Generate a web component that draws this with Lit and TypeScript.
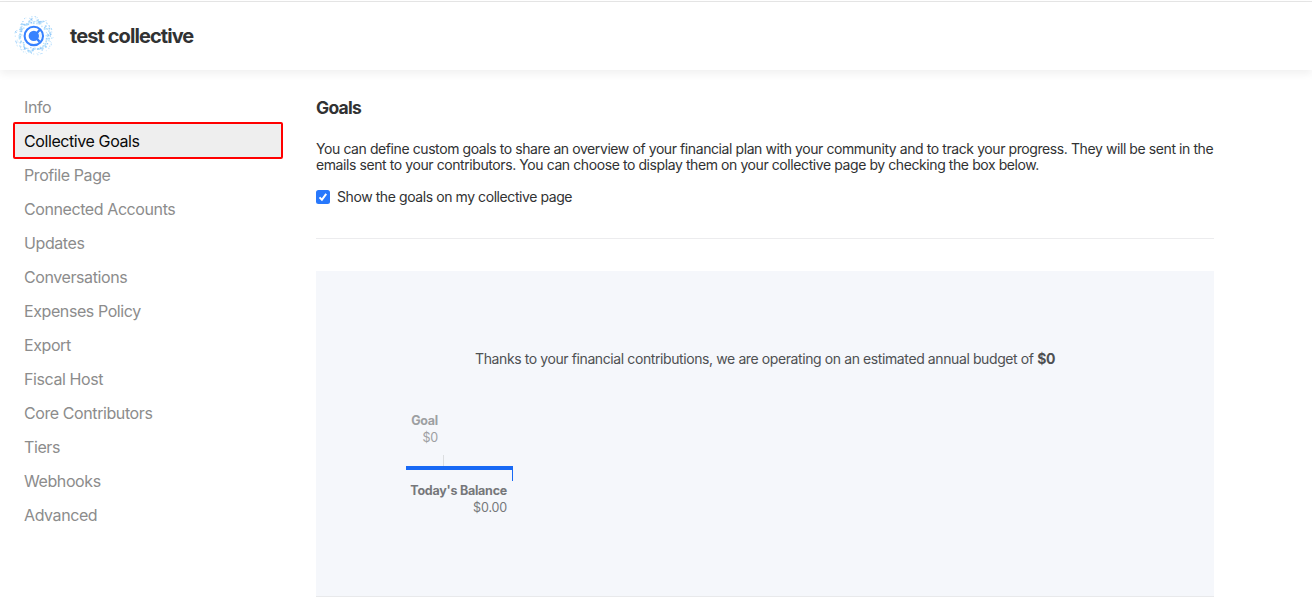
import { LitElement, html, css, svg } from "lit";
import { customElement, property } from "lit/decorators.js";
import { classMap } from "lit/directives/class-map.js";

const MENU = [
  "Info",
  "Collective Goals",
  "Profile Page",
  "Connected Accounts",
  "Updates",
  "Conversations",
  "Expenses Policy",
  "Export",
  "Fiscal Host",
  "Core Contributors",
  "Tiers",
  "Webhooks",
  "Advanced",
];

const DOT_COLORS = ["#b5e0fb", "#9dd3fb", "#c9e8fc", "#a9d8fb", "#8dc6fa"];

// Golden-angle scatter of small squares in a halo around the emblem.
const DOTS = Array.from({ length: 170 }, (_, i) => {
  const angle = i * 2.39996;
  const noise = Math.abs(Math.sin(i * 78.233) * 43758.5453) % 1;
  const radius = 12.2 + noise * 7.4;
  return {
    x: 20 + Math.cos(angle) * radius,
    y: 19.7 + Math.sin(angle) * radius,
    size: radius > 17 ? 0.9 : 1.2 + (i % 3) * 0.3,
    color: DOT_COLORS[i % DOT_COLORS.length],
  };
});

@customElement("collective-logo")
class CollectiveLogo extends LitElement {
  static styles = css`
    :host { display: block; width: 40px; height: 40px; }
    svg { display: block; }
  `;
  render() {
    return html`<svg width="40" height="40" viewBox="0 0 40 40" aria-hidden="true">
      ${DOTS.map((d) => svg`<rect x=${d.x - d.size / 2} y=${d.y - d.size / 2} width=${d.size} height=${d.size} fill=${d.color} />`)}
      <circle cx="19.8" cy="19.9" r="10.8" fill="#fff" />
      <circle cx="19.8" cy="19.9" r="9.2" fill="none" stroke="#3782ff" stroke-width="2.1" />
      <circle cx="19.8" cy="19.9" r="5.2" fill="#3782ff" />
      <path d="M22.8 17.2 25.6 14M22.8 22.6 25.6 25.8" stroke="#3782ff" stroke-width="2.4" />
      <path d="M25.4 17q2 2.9 0 5.8" fill="none" stroke="#e8f2ff" stroke-width="1.7" />
    </svg>`;
  }
}

@customElement("settings-menu")
class SettingsMenu extends LitElement {
  @property() active = "Collective Goals";
  static styles = css`
    :host { display: block; width: 270px; }
    .item {
      box-sizing: border-box;
      height: 34px;
      padding-left: 11px;
      font-size: 16px;
      line-height: 34px;
      color: #8c8c8c;
      letter-spacing: -0.41px;
    }
    .active {
      height: 37px;
      margin: -2px 0 -1px;
      padding-left: 9px;
      line-height: 34px;
      border: 2px solid #ff0000;
      border-radius: 2px;
      background: #eee;
      color: #090909;
    }
  `;
  render() {
    return html`<nav>
      ${MENU.map((m) => html`<div class=${classMap({ item: true, active: m === this.active })}>${m}</div>`)}
    </nav>`;
  }
}

@customElement("goals-chart")
class GoalsChart extends LitElement {
  static styles = css`
    :host {
      display: block;
      box-sizing: border-box;
      height: 326px;
      padding-top: 78px;
      background: #f5f7fb;
      border-bottom: 1px solid #e8e9eb;
    }
    .intro {
      text-align: center;
      font-size: 14px;
      line-height: 20px;
      letter-spacing: -0.4px;
      color: #4e5052;
    }
    .chart { width: 107px; margin: 43px 0 0 90px; font-size: 12.5px; line-height: 17px; letter-spacing: -0.15px; text-align: right; }
    .goal { width: 32px; padding-bottom: 9px; color: #9d9fa2; }
    .goal-tick { width: 1px; height: 11px; margin-left: 37px; background: #dcdee0; }
    .bar { height: 4px; background: #1869f5; }
    .bar-tick { width: 1px; height: 11px; margin-left: auto; background: #1869f5; }
    .balance { padding: 1px 6px 0 0; color: #76777a; white-space: nowrap; }
    .name { font-weight: 700; letter-spacing: -0.24px; }
  `;
  render() {
    return html`
      <div class="intro">
        Thanks to your financial contributions, we are operating on an estimated annual budget of <b>$0</b>
      </div>
      <div class="chart">
        <div class="goal"><div class="name">Goal</div><div>$0</div></div>
        <div class="goal-tick"></div>
        <div class="bar"></div>
        <div class="bar-tick"></div>
        <div class="balance"><div class="name">Today's Balance</div><div>$0.00</div></div>
      </div>
    `;
  }
}

@customElement("app-root")
class AppRoot extends LitElement {
  static styles = css`
    :host {
      display: block;
      height: 616px;
      overflow: hidden;
      background: #fff;
      font-family: Inter, sans-serif;
      color: #313233;
    }
    .rule { height: 1px; padding-top: 1px; background: #e6e6e6 content-box; }
    .header {
      display: flex;
      align-items: center;
      box-sizing: border-box;
      height: 68px;
      padding-left: 14px;
      box-shadow: 0 4px 8px rgba(20, 20, 20, 0.06);
    }
    h1 { margin: 0 0 0 16px; font-size: 20px; line-height: 28px; font-weight: 700; letter-spacing: -0.92px; }
    .body { display: flex; align-items: flex-start; }
    settings-menu { margin: 20px 33px 0 13px; }
    main { width: 898px; padding-top: 24px; }
    h2 { margin: 0; font-size: 17.5px; line-height: 27px; font-weight: 700; letter-spacing: -0.75px; }
    p { margin: 20px 0 0; font-size: 14px; line-height: 16px; letter-spacing: -0.415px; white-space: nowrap; }
    .check { display: flex; align-items: center; gap: 7px; margin-top: 14px; font-size: 14px; line-height: 20px; letter-spacing: -0.42px; }
    .box { display: block; width: 14px; height: 14px; }
    hr { height: 1px; margin: 31px 0 32px; border: 0; background: #ececee; }
  `;
  render() {
    return html`
      <div class="rule"></div>
      <header class="header">
        <collective-logo></collective-logo>
        <h1>test collective</h1>
      </header>
      <div class="body">
        <settings-menu></settings-menu>
        <main>
          <h2>Goals</h2>
          <p>
            You can define custom goals to share an overview of your financial plan with your community and to track your progress. They will be sent in the<br />emails sent to your contributors. You can choose to display them on your collective page by checking the box below.
          </p>
          <div class="check" role="checkbox" aria-checked="true">
            <svg class="box" viewBox="0 0 14 14">
              <rect width="14" height="14" rx="2.5" fill="#2878fc" />
              <path d="M3.5 7.4 5.9 9.8 10.2 3.8" fill="none" stroke="#fff" stroke-width="2" />
            </svg>
            <span>Show the goals on my collective page</span>
          </div>
          <hr />
          <goals-chart></goals-chart>
        </main>
      </div>
    `;
  }
}
